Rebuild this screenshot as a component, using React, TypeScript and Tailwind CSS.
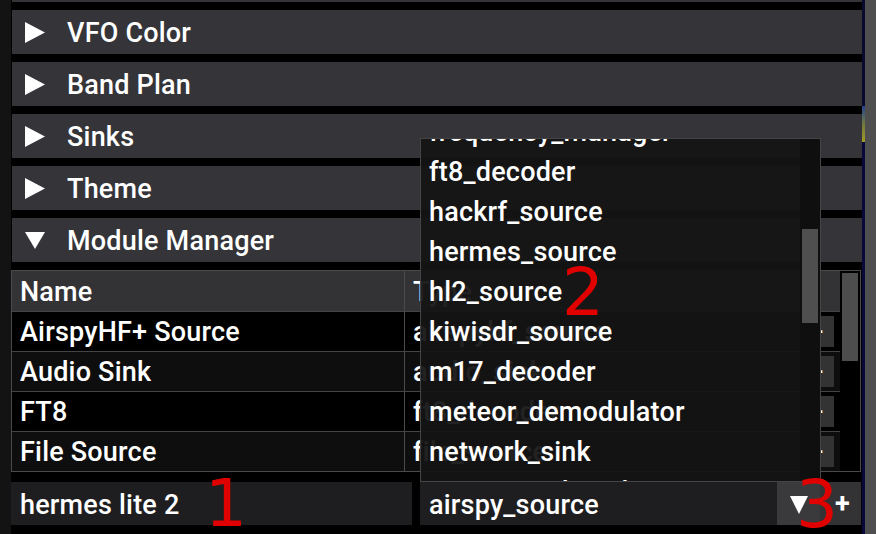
import React from 'react';

const headers = ['VFO Color', 'Band Plan', 'Sinks', 'Theme'];

const modules = [
  { name: 'AirspyHF+ Source', type: 'airspyhf_source' },
  { name: 'Audio Sink', type: 'audio_sink' },
  { name: 'FT8', type: 'ft8_decoder' },
  { name: 'File Source', type: 'file_source' },
];

const moduleTypes = [
  'frequency_manager',
  'ft8_decoder',
  'hackrf_source',
  'hermes_source',
  'hl2_source',
  'kiwisdr_source',
  'm17_decoder',
  'meteor_demodulator',
  'network_sink',
  'noaa_apt_decoder',
];

const RightArrow = () => (
  <svg width="20" height="21" viewBox="0 0 20 21" className="shrink-0">
    <polygon points="0,0 20,10.5 0,21" fill="#ffffff" />
  </svg>
);

const DownArrow = ({ w = 20, h = 17 }: { w?: number; h?: number }) => (
  <svg width={w} height={h} viewBox={`0 0 ${w} ${h}`} className="shrink-0">
    <polygon points={`0,0 ${w},0 ${w / 2},${h}`} fill="#ffffff" />
  </svg>
);

const Header = ({ label, open = false }: { label: string; open?: boolean }) => (
  <div className="ml-px h-11 mt-2 bg-[#343439] flex items-center pl-[13px]">
    {open ? <DownArrow /> : <RightArrow />}
    <span className="ml-[22px] pt-[3px] tracking-[0.2px]">{label}</span>
  </div>
);

const App: React.FC = () => {
  return (
    <div className="relative w-[876px] h-[534px] bg-black flex overflow-hidden text-white text-[27px] leading-none font-medium font-['Roboto','Liberation_Sans',sans-serif]">
      {/* left edge */}
      <div className="w-[11px] bg-[#131313]" />

      {/* main column */}
      <div className="w-[851px] flex flex-col">
        <div className="ml-px h-[2px] bg-[#343439]" />
        {headers.map(h => (
          <Header key={h} label={h} />
        ))}
        <Header label="Module Manager" open />

        {/* module table */}
        <div className="mt-2 mr-px h-[202px] border border-[#4a4a4a] flex tracking-[0.2px]">
          <div className="flex-1 flex flex-col">
            <div className="h-10 grid grid-cols-[393px_1fr_40px] bg-[#333336]">
              <div className="border-r border-[#4a4a4a] flex items-center pl-2 pt-[2px]">Name</div>
              <div className="flex items-center pl-2 pt-[2px]">Type</div>
              <div className="bg-[#333336]" />
            </div>
            {modules.map((m, i) => (
              <div
                key={m.name}
                className={`h-10 grid grid-cols-[393px_1fr_40px] border-t border-[#444] ${i % 2 === 1 ? 'bg-[#0e0e0e]' : 'bg-black'}`}
              >
                <div className="border-r border-[#4a4a4a] flex items-center pl-2 pt-[2px]">{m.name}</div>
                <div className="flex items-center pl-2 pt-[2px]">{m.type}</div>
                <div className="flex items-center justify-end pr-[6px]">
                  <div className="w-[30px] h-[31px] bg-[#333] flex items-center justify-center">-</div>
                </div>
              </div>
            ))}
          </div>
          {/* table scrollbar */}
          <div className="w-[20px] bg-black pt-[2px] px-[2px]">
            <div className="h-[88px] bg-[#4d4d4d]" />
          </div>
        </div>

        {/* bottom inputs */}
        <div className="mt-[10px] flex h-[43px] tracking-[0.2px]">
          <div className="w-[401px] bg-[#1e1e20] flex items-center pl-[9px] pt-[3px]">hermes lite 2</div>
          <div className="ml-2 w-[357px] bg-[#1e1e20] flex items-center pl-[9px] pt-[3px]">airspy_source</div>
          <div className="w-[43px] bg-[#3a3a3d] flex items-center justify-center pt-[2px]">
            <DownArrow w={18} h={18} />
          </div>
          <div className="w-[41px] bg-[#333336] flex items-center justify-center pl-[4px] pt-[2px] text-[27px] font-bold">+</div>
        </div>
      </div>

      {/* waterfall edge + main scrollbar */}
      <div className="w-[3px] flex flex-col bg-[#08083a]">
        <div className="h-[106px] bg-[#0a0a2e]" />
        <div className="h-[36px] bg-gradient-to-b from-[#2a3f8a] via-[#6f7a3a] to-[#a39a20]" />
      </div>
      <div className="w-[11px] bg-[#4f4f4f]" />

      {/* open combo popup */}
      <div className="absolute left-[420px] top-[138px] w-[401px] h-[344px] border border-[#444] bg-[#141414f0] overflow-hidden tracking-[0.2px]">
        <div className="-mt-[27px] mr-[20px]">
          {moduleTypes.map(t => (
            <div key={t} className="h-10 flex items-center pl-2">{t}</div>
          ))}
        </div>
        <div className="absolute right-0 top-0 bottom-0 w-[20px] bg-[#0f0f0f]">
          <div className="mt-[90px] mx-[2px] h-[94px] bg-[#4f4f4f]" />
        </div>
      </div>

      {/* red annotations */}
      <div className="absolute left-[205px] top-[471px] text-[66px] leading-none font-normal text-[#e00000] font-['DejaVu_Sans',sans-serif]">1</div>
      <div className="absolute left-[562px] top-[260px] text-[66px] leading-none font-normal text-[#e00000] font-['DejaVu_Sans',sans-serif]">2</div>
      <div className="absolute left-[796px] top-[472px] text-[66px] leading-none font-normal text-[#e00000] font-['DejaVu_Sans',sans-serif]">3</div>
    </div>
  );
};

export default App;
